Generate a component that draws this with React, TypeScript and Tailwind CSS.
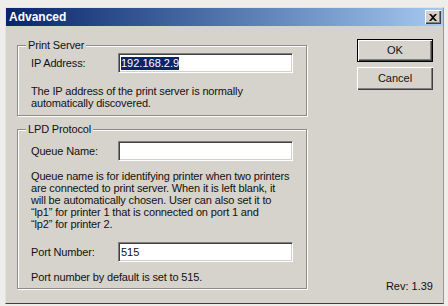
import React from "react";

const sunken =
  "bg-white border-t border-l border-[#808080] border-b border-r border-b-white border-r-white shadow-[inset_1px_1px_0_#404040,inset_-1px_-1px_0_#d4d0c8]";

function Field({ value, selected }: { value?: string; selected?: boolean }) {
  return (
    <div className={`w-[175px] h-[20px] flex items-center pl-[2px] ${sunken}`}>
      {value ? (
        <span
          className={`leading-[13px] text-[11px] ${
            selected ? "bg-[#0a246a] text-white" : "text-[#111]"
          }`}
        >
          {value}
        </span>
      ) : null}
    </div>
  );
}

function Row({ label, value, selected }: { label: string; value?: string; selected?: boolean }) {
  return (
    <div className="flex items-center h-[20px]">
      <div className="w-[87px] text-[11px] leading-[13px] tracking-[-0.15px]">{label}</div>
      <Field value={value} selected={selected} />
    </div>
  );
}

export default function App() {
  return (
    <div className="w-[448px] h-[306px] bg-[#eeede9] pt-[7px] pl-[5px] pr-[4px] pb-[2px] flex font-['Liberation_Sans',Arial,sans-serif] text-[#111]">
      <div className="flex-1 flex flex-col bg-[#d6d3cc] border border-t-[#e4e2dc] border-l-[#e4e2dc] border-b-[#404040] border-r-[#9a9892]">
        {/* Title bar */}
        <div className="h-[18px] flex items-center bg-gradient-to-r from-[#0a246a] to-[#a6caf0] pl-[3px] pr-[2px]">
          <span className="text-white font-bold text-[12px] leading-[14px]">Advanced</span>
          <div className="ml-auto w-[16px] h-[14px] bg-[#d4d0c8] flex items-center justify-center shadow-[inset_1px_1px_0_#fff,inset_-1px_-1px_0_#404040,inset_-2px_-2px_0_#808080]">
            <svg width="8" height="7" viewBox="0 0 8 7">
              <path d="M0 0h2l2 2 2-2h2L5 3.5 8 7H6L4 5 2 7H0l3-3.5z" fill="#000" />
            </svg>
          </div>
        </div>

        {/* Body */}
        <div className="flex-1 flex pl-[11px] pr-[10px] pt-[13px] pb-[11px]">
          <div className="w-[288px] flex flex-col">
            <fieldset className="border border-[#8e8c86] shadow-[inset_1px_1px_0_#fff,1px_1px_0_#fff] pb-[6px]">
              <legend className="ml-[8px] px-[2px] text-[11px] leading-[13px] tracking-[-0.15px] bg-[#d6d3cc]">Print Server</legend>
              <div className="px-[13px]">
                <div className="mt-[1px]">
                  <Row label="IP Address:" value="192.168.2.9" selected />
                </div>
                <div className="mt-[12px] text-[11px] leading-[12px] tracking-[-0.15px] whitespace-nowrap">
                  The IP address of the print server is normally
                  <br />
                  automatically discovered.
                </div>
              </div>
            </fieldset>

            <fieldset className="mt-[7px] border border-[#8e8c86] shadow-[inset_1px_1px_0_#fff,1px_1px_0_#fff] pb-[5px]">
              <legend className="ml-[8px] px-[2px] text-[11px] leading-[13px] tracking-[-0.15px] bg-[#d6d3cc]">LPD Protocol</legend>
              <div className="px-[13px]">
                <div className="mt-[5px]">
                  <Row label="Queue Name:" />
                </div>
                <div className="mt-[9px] text-[11px] leading-[12px] tracking-[-0.15px] whitespace-nowrap">
                  Queue name is for identifying printer when two printers
                  <br />
                  are connected to print server. When it is left blank, it
                  <br />
                  will be automatically chosen. User can also set it to
                  <br />
                  “lp1” for printer 1 that is connected on port 1 and
                  <br />
                  “lp2” for printer 2.
                </div>
                <div className="mt-[12px]">
                  <Row label="Port Number:" value="515" />
                </div>
                <div className="mt-[9px] text-[11px] leading-[12px] tracking-[-0.15px] whitespace-nowrap">
                  Port number by default is set to 515.
                </div>
              </div>
            </fieldset>
          </div>

          <div className="ml-auto flex flex-col items-end">
            <button className="w-[76px] h-[23px] border border-black bg-[#d6d3cc] text-[11px] leading-[13px] shadow-[inset_1px_1px_0_#fff,inset_-1px_-1px_0_#404040,inset_-2px_-2px_0_#808080]">
              OK
            </button>
            <button className="mt-[5px] w-[76px] h-[23px] bg-[#d6d3cc] text-[11px] leading-[13px] shadow-[inset_1px_1px_0_#fff,inset_-1px_-1px_0_#404040,inset_-2px_-2px_0_#808080]">
              Cancel
            </button>
            <div className="mt-auto text-[11px] leading-[12px]">Rev: 1.39</div>
          </div>
        </div>
      </div>
    </div>
  );
}
